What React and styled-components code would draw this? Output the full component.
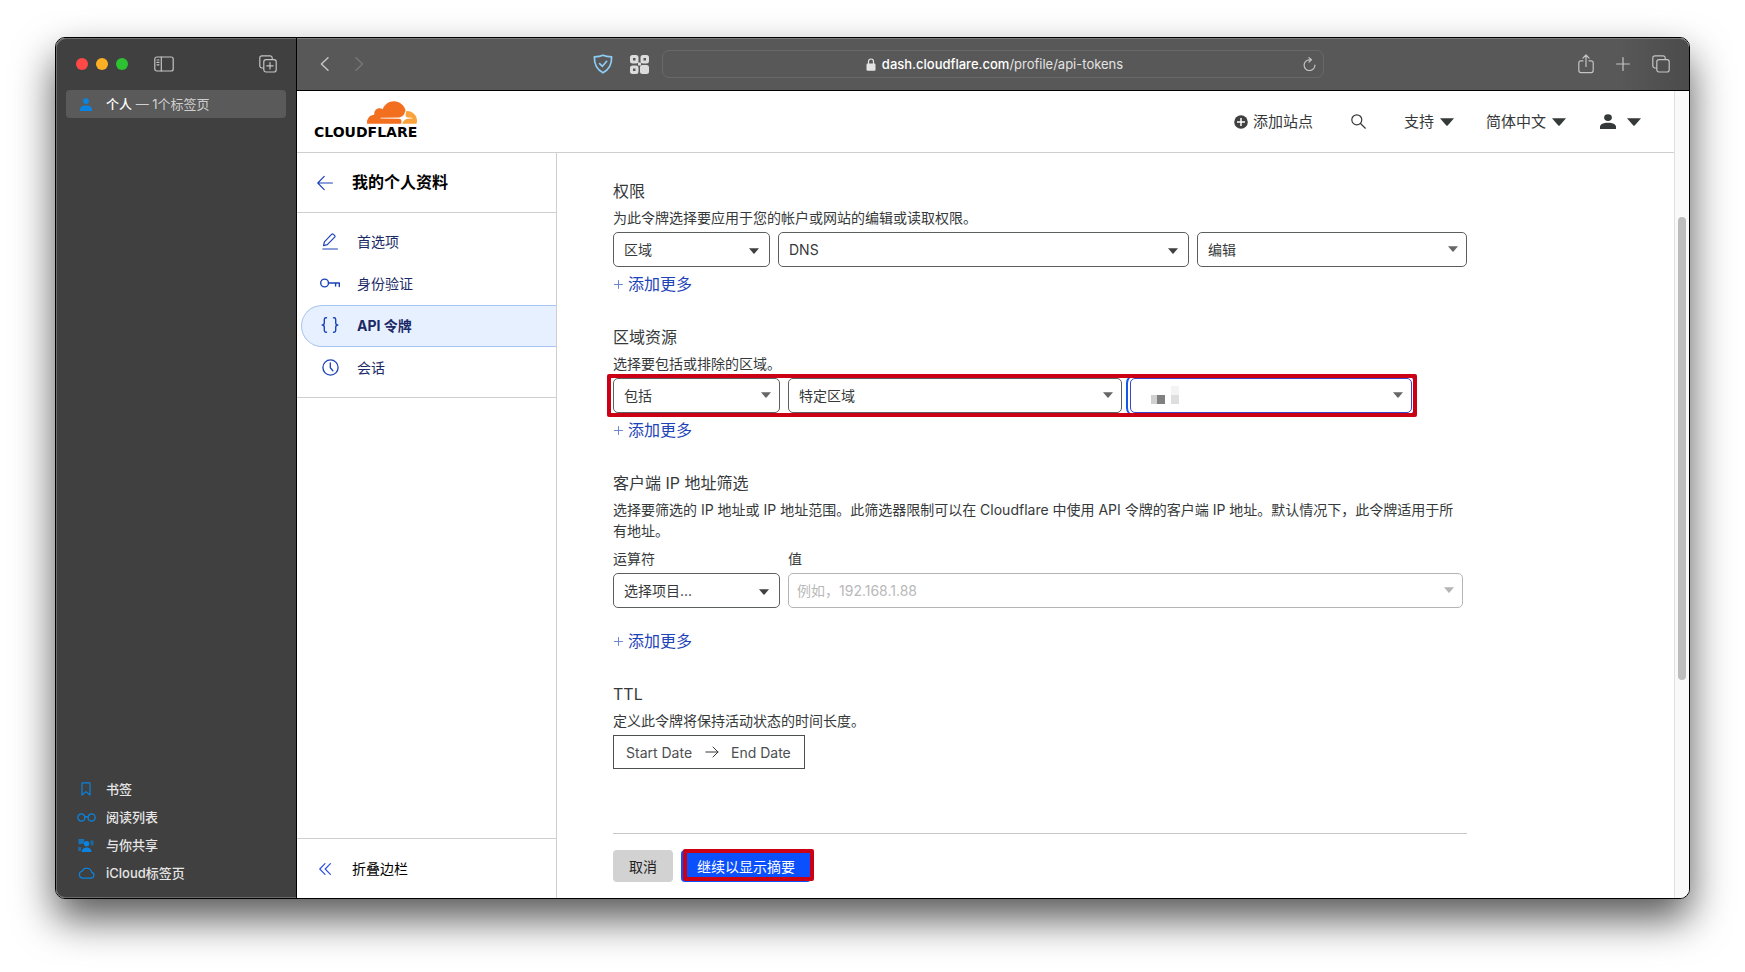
import React, { useState } from 'react';
import styled, { createGlobalStyle, css } from 'styled-components';

const colors = {
    chromeDark: '#404040',
    chrome: '#585858',
    chromeIcon: '#c4c4c4',
    accent: '#0a84e0',
    line: '#cfcfcf',
    text: '#36393a',
    link: '#1d43b8',
    navText: '#1b2a66',
    primary: '#0a50ff',
    mark: '#cb0014',
};

const GlobalStyle = createGlobalStyle`
    * {
        box-sizing: border-box;
    }
    body {
        margin: 0;
        background: #fff;
        color: ${colors.text};
        font-family: Inter, "Noto Sans CJK SC", sans-serif;
        font-size: 14px;
        line-height: 21px;
    }
    button, input, select {
        font: inherit;
        color: inherit;
    }
    button {
        padding: 0;
        border: none;
        background: none;
        cursor: pointer;
    }
    a {
        color: inherit;
        text-decoration: none;
    }
    svg {
        display: block;
        flex: none;
    }
`;

/* ---------- window ---------- */

const Desktop = styled.div`
    display: flex;
    min-height: 100vh;
    padding: 37px 55px 73px;
`;

const BrowserWindow = styled.div`
    display: flex;
    flex: 1;
    min-width: 0;
    overflow: hidden;
    border: 1px solid #000;
    border-radius: 10px;
    background: #fff;
    box-shadow: 0 20px 40px rgba(0, 0, 0, 0.66);
`;

const TabSidebar = styled.aside`
    display: flex;
    flex-direction: column;
    flex: none;
    width: 241px;
    padding: 0 10px 11px;
    border-right: 1px solid #000;
    border-radius: 9px 0 0 9px;
    background: ${colors.chromeDark};
    box-shadow: inset 1px 1px 0 #6c6c6c, inset 0 -1px 0 #6c6c6c;
    color: #e6e6e6;
    font-size: 13px;
`;

const WindowControls = styled.div`
    display: flex;
    align-items: center;
    height: 52px;
    padding: 0 9px 0 10px;
    color: ${colors.chromeIcon};
`;

const Light = styled.button`
    width: 12px;
    height: 12px;
    margin-right: 8px;
    border-radius: 50%;
    background: ${({ $color }) => $color};
`;

const PanelButton = styled.button`
    margin-left: 18px;
    margin-right: auto;
`;

const SideRow = styled.button`
    display: grid;
    grid-template-columns: 20px 1fr;
    gap: 10px;
    align-items: center;
    height: 28px;
    padding: 0 10px;
    border-radius: 4px;
    text-align: left;
    font-weight: 500;
    background: ${({ $active }) => ($active ? '#5a5a5a' : 'none')};
    color: ${({ $active }) => ($active ? '#d0d0d0' : 'inherit')};

    svg {
        justify-self: center;
        color: ${colors.accent};
    }
    span {
        font-weight: 400;
    }
    strong {
        font-weight: 500;
        color: #fff;
    }
`;

const SideLinks = styled.nav`
    display: flex;
    flex-direction: column;
    margin-top: auto;
`;

const BrowserMain = styled.div`
    display: flex;
    flex-direction: column;
    flex: 1;
    min-width: 0;
`;

const Toolbar = styled.div`
    display: flex;
    align-items: center;
    height: 53px;
    border-bottom: 1px solid #000;
    border-radius: 0 9px 0 0;
    background: linear-gradient(to left, #4b4b4b, ${colors.chrome} 70px);
    box-shadow: inset 0 1px 0 #7c7c7c;
    color: ${colors.chromeIcon};
`;

const ToolbarSide = styled.div`
    display: flex;
    align-items: center;
    flex: 1;
    gap: ${({ $gap }) => $gap}px;
    padding: ${({ $end }) => ($end ? '0 19px 0 17px' : '0 13px 0 23px')};
    justify-content: ${({ $end }) => ($end ? 'flex-end' : 'flex-start')};
`;

const ToolGroup = styled.div`
    display: flex;
    align-items: center;
    gap: 26px;
    margin-right: auto;
`;

const AddressBar = styled.div`
    display: flex;
    align-items: center;
    flex: 0 1 662px;
    height: 28px;
    padding: 0 7px;
    border: 1px solid #696969;
    border-radius: 7px;
    font-size: 13px;
`;

const Address = styled.a`
    display: flex;
    align-items: center;
    justify-content: center;
    flex: 1;
    gap: 6px;
    padding-left: 16px;
    color: #e3e3e3;

    strong {
        font-weight: 500;
        color: #fff;
    }
`;

/* ---------- page ---------- */

const Viewport = styled.div`
    display: flex;
    flex: 1;
    min-height: 0;
`;

const Page = styled.div`
    display: flex;
    flex-direction: column;
    flex: 1;
    min-width: 0;
`;

const ScrollTrack = styled.div`
    display: flex;
    flex-direction: column;
    flex: none;
    align-items: center;
    width: 15px;
    padding-top: 126px;
    border-left: 1px solid #e0e0e0;
    background: #f9f9f9;
`;

const ScrollThumb = styled.div`
    width: 8px;
    height: 68%;
    border-radius: 4px;
    background: #bdbdbd;
`;

const PageHeader = styled.header`
    display: flex;
    align-items: center;
    height: 62px;
    padding: 0 33px 0 17px;
    border-bottom: 1px solid ${colors.line};
    font-size: 15px;
`;

const Logo = styled.a`
    display: flex;
    flex-direction: column;
    align-items: flex-end;
    gap: 2px;
    margin-right: auto;
    padding-bottom: 4px;
    color: #000;
    font-family: "DejaVu Sans", Inter, sans-serif;
    font-size: 14px;
    font-weight: 700;
    line-height: 12px;
`;

const HeaderButton = styled.button`
    display: flex;
    align-items: center;
    gap: ${({ $gap }) => $gap || 5}px;
    margin-left: ${({ $space }) => $space}px;
`;

const Columns = styled.div`
    display: flex;
    flex: 1;
`;

const ProfileNav = styled.aside`
    display: flex;
    flex-direction: column;
    flex: none;
    width: 260px;
    border-right: 1px solid ${colors.line};
`;

const navBar = css`
    display: flex;
    align-items: center;
    height: 60px;
    gap: 19px;
    padding-left: 20px;
    color: #000;
`;

const NavTitle = styled.a`
    ${navBar}
    border-bottom: 1px solid ${colors.line};
    font-size: 16px;
    font-weight: 700;

    svg {
        color: ${colors.link};
    }
`;

const CollapseButton = styled.button`
    ${navBar}
    margin-top: auto;
    border-top: 1px solid ${colors.line};

    svg {
        margin: 0 2px;
        color: #2b50e0;
    }
`;

const NavList = styled.nav`
    display: flex;
    flex-direction: column;
    padding: 8px 0 8px 4px;
    border-bottom: 1px solid ${colors.line};
`;

const NavItem = styled.a`
    display: grid;
    grid-template-columns: 20px 1fr;
    gap: 17px;
    align-items: center;
    height: 42px;
    padding: 0 0 2px 18px;
    border: 1px solid transparent;
    border-right: none;
    border-radius: 21px 0 0 21px;
    color: ${colors.navText};

    svg {
        justify-self: center;
        color: #1d43b8;
    }

    ${({ $active }) => $active && css`
        border-color: #a9c4ef;
        background: #e7f0fe;
        font-weight: 700;
    `}
`;

const Content = styled.main`
    flex: 1;
    min-width: 0;
    max-width: 966px;
    padding: 26px 56px 15px;
`;

const Group = styled.section`
    margin-bottom: 29px;
`;

const GroupTitle = styled.h2`
    margin: 0 0 4px;
    font-size: 16px;
    font-weight: 400;
    line-height: 24px;
`;

const GroupText = styled.p`
    max-width: 850px;
    margin: 0 0 4px;
`;

const FieldRow = styled.div`
    position: relative;
    display: grid;
    grid-template-columns: ${({ $columns }) => $columns};
    gap: 8px;
    margin-right: ${({ $inset }) => $inset || 0}px;
`;

const Field = styled.div`
    display: flex;
    flex-direction: column;
    gap: 4px;
    margin-top: 3px;
`;

const SelectBox = styled.div`
    position: relative;

    svg {
        position: absolute;
        right: ${({ $native }) => ($native ? 11 : 9)}px;
        top: ${({ $native }) => ($native ? 16 : 14)}px;
        color: ${({ $muted, $native }) => ($muted ? '#b5b5b5' : $native ? '#404040' : '#666')};
        pointer-events: none;
    }
`;

const controlBox = css`
    display: block;
    width: 100%;
    height: 35px;
    padding: 0 28px 0 10px;
    border: 1px solid #5c5f60;
    border-radius: 5px;
    background: #fff;
`;

const SelectControl = styled.select`
    ${controlBox}
    appearance: none;

    ${({ $focused }) => $focused && css`
        border-color: #3b45c9;
        outline: 2px solid #1458e8;
        outline-offset: 2px;
    `}
`;

const ValueInput = styled.input`
    ${controlBox}
    padding-left: 8px;
    border-color: #b5b5b5;

    &::placeholder {
        color: #b9b9b9;
        opacity: 1;
    }
`;

const Redacted = styled.span`
    position: absolute;
    left: 21px;
    top: 8px;
    pointer-events: none;

    svg {
        position: static;
    }
`;

const Marker = styled.span`
    position: absolute;
    inset: ${({ $inset }) => $inset};
    border: 4px solid ${colors.mark};
    border-radius: 2px;
    pointer-events: none;
`;

const AddMore = styled.button`
    display: flex;
    align-items: center;
    gap: 5px;
    height: 24px;
    margin-top: ${({ $space }) => $space || 5}px;
    padding-left: 1px;
    color: ${colors.link};
    font-size: 16px;

    svg {
        color: #6c86cf;
    }
`;

const DateRange = styled.div`
    display: inline-flex;
    align-items: center;
    gap: 12px;
    height: 34px;
    padding: 0 12px;
    border: 1px solid #4c4f50;
    vertical-align: top;

    input {
        width: 67px;
        padding: 0;
        border: none;
        background: none;
    }
    input:last-child {
        width: 61px;
    }
    input::placeholder {
        color: #4c4f50;
        opacity: 1;
    }
`;

const Actions = styled.div`
    display: flex;
    gap: 8px;
    margin-top: 64px;
    padding-top: 16px;
    border-top: 1px solid #c8c8c8;
`;

const ActionButton = styled.button`
    position: relative;
    height: 32px;
    padding: 0 16px;
    border-radius: 4px;
    background: ${({ $primary }) => ($primary ? colors.primary : '#d2d2d2')};
    color: ${({ $primary }) => ($primary ? '#fff' : '#222')};
`;

/* ---------- icons ---------- */

const Icon = ({ w = 16, h = 16, sw = 1.2, box, children }) => (
    <svg
        width={w}
        height={h}
        viewBox={box || `0 0 ${w} ${h}`}
        fill="none"
        stroke="currentColor"
        strokeWidth={sw}
        strokeLinecap="round"
        strokeLinejoin="round"
        aria-hidden="true"
    >
        {children}
    </svg>
);

const Caret = ({ w = 10, h = 6 }) => (
    <svg width={w} height={h} viewBox="0 0 10 6" preserveAspectRatio="none" fill="currentColor" aria-hidden="true">
        <path d="M0 .2h10L5.5 5.6q-.5.5-1 0z" />
    </svg>
);

const PanelIcon = () => (
    <Icon w={20} h={16}>
        <rect x="0.8" y="1" width="18.4" height="14" rx="2" />
        <path d="M7.3 1v14M3 4h2M3 6.4h2M3 8.8h2" />
    </Icon>
);

const NewTabGroupIcon = () => (
    <Icon w={18} h={18}>
        <path d="M4.6 13H3a2.2 2.2 0 0 1-2.2-2.2V3A2.2 2.2 0 0 1 3 .8h8A2.2 2.2 0 0 1 13.2 3v1.4" />
        <rect x="4.8" y="4.6" width="12.4" height="12.4" rx="2.2" />
        <path d="M11 7.6v6.4M7.8 10.8h6.4" />
    </Icon>
);

const PersonIcon = ({ w = 12, h = 13 }) => (
    <svg width={w} height={h} viewBox="0 0 12 13" fill="currentColor" preserveAspectRatio="none" aria-hidden="true">
        <circle cx="6" cy="3.1" r="2.9" />
        <path d="M0 13v-1.6C0 8.9 2.3 7.6 6 7.6s6 1.3 6 3.8V13z" />
    </svg>
);

const BookmarkIcon = () => (
    <Icon w={10} h={14}>
        <path d="M1 1.6Q1 .8 1.8.8h6.4Q9 .8 9 1.6V13L5 9.6 1 13z" />
    </Icon>
);

const GlassesIcon = () => (
    <Icon w={19} h={9} sw={1.3}>
        <circle cx="4.4" cy="4.5" r="3.6" />
        <circle cx="14.6" cy="4.5" r="3.6" />
        <path d="M8 4.2q1.5-1 3 0" />
    </Icon>
);

const SharedIcon = () => (
    <svg width="16" height="13" viewBox="0 0 16 13" fill="currentColor" aria-hidden="true">
        <path d="M.5 0h5.7v4.8H3L1.5 6.2V4.8h-1z" opacity=".75" />
        <path d="M12 1.5h3.5v5H13zM0 8h3.5L3 12H0z" opacity=".6" />
        <circle cx="8.6" cy="4.8" r="2.7" />
        <path d="M3.7 13c0-3 1.8-4.6 4.9-4.6s4.9 1.6 4.9 4.6z" />
    </svg>
);

const CloudIcon = () => (
    <Icon w={17} h={12}>
        <path d="M4.2 11.2h8.9a3 3 0 0 0 .6-5.9A5 5 0 0 0 4.3 4 3.7 3.7 0 0 0 4.2 11.2z" />
    </Icon>
);

const ShieldIcon = () => (
    <Icon w={20} h={20} sw={1.7}>
        <g stroke="#8fccf5">
            <path d="M10 1.2c2.6 1.1 5.4 1.5 8.6 1.7.3 8-2.5 12.7-8.6 15.9C3.9 15.6 1.1 10.9 1.4 2.9 4.6 2.7 7.4 2.3 10 1.2z" />
            <path d="M6.6 9.6l2.8 2.7 4.3-5" />
        </g>
    </Icon>
);

const QrIcon = () => (
    <svg width="19" height="19" viewBox="0 0 19 19" fill="none" stroke="#dcdcdc" strokeWidth="3" aria-hidden="true">
        <rect x="1.5" y="1.5" width="5.5" height="5.5" rx="1" />
        <rect x="12" y="1.5" width="5.5" height="5.5" rx="1" />
        <rect x="1.5" y="12" width="5.5" height="5.5" rx="1" />
        <rect x="11.5" y="11.5" width="6" height="6" rx="1" fill="#dcdcdc" />
        <path d="M8 9h3" />
    </svg>
);

const LockIcon = () => (
    <svg width="10" height="13" viewBox="0 0 10 13" aria-hidden="true">
        <rect x=".5" y="5.5" width="9" height="7.3" rx="1.2" fill="#e3e3e3" />
        <path d="M2.5 6V3.5a2.5 2.5 0 0 1 5 0V6" fill="none" stroke="#e3e3e3" strokeWidth="1.2" />
    </svg>
);

const ReloadIcon = () => (
    <Icon w={13} h={14}>
        <path d="M11.9 8A5.4 5.4 0 1 1 6.5 2.8h1.7M6 .6l2.4 2.2L6 5.2" />
    </Icon>
);

const ShareIcon = () => (
    <Icon w={16} h={20}>
        <path d="M5 6.8H2.8A2 2 0 0 0 .8 8.8v7.8a2 2 0 0 0 2 2h10.4a2 2 0 0 0 2-2V8.8a2 2 0 0 0-2-2H11M8 12.5V1.2M4.9 4.1L8 1l3.1 3.1" />
    </Icon>
);

const TabsIcon = () => (
    <Icon w={18} h={18}>
        <path d="M4.6 13H3a2.2 2.2 0 0 1-2.2-2.2V3A2.2 2.2 0 0 1 3 .8h8A2.2 2.2 0 0 1 13.2 3v1.4" />
        <rect x="4.8" y="4.6" width="12.4" height="12.4" rx="2.2" />
    </Icon>
);

const CloudflareMark = () => (
    <svg width="50" height="23" viewBox="0 6.5 24 11" aria-hidden="true">
        <path
            fill="#f36f20"
            d="M16.5088 16.8447c.1475-.5068.0908-.9707-.1553-1.3154-.2246-.3164-.6045-.499-1.0615-.5205l-8.6592-.1123a.1559.1559 0 0 1-.1333-.0713c-.0283-.042-.0351-.0986-.021-.1553.0278-.084.1123-.1484.2036-.1562l8.7359-.1123c1.0351-.0489 2.1601-.8868 2.5537-1.9136l.499-1.3013c.0215-.0561.0293-.1128.0147-.168-.5625-2.5463-2.835-4.4453-5.5499-4.4453-2.5039 0-4.6284 1.6177-5.3876 3.8614-.4927-.3658-1.1187-.5625-1.794-.499-1.2026.119-2.1665 1.083-2.2861 2.2856-.0283.31-.0069.6128.0635.894C1.5683 13.171 0 14.7754 0 16.752c0 .1748.0142.3515.0352.5273.0141.083.0844.1475.1689.1475h15.9814c.0909 0 .1758-.0645.2032-.1553l.12-.4268z"
        />
        <path
            fill="#faa23b"
            d="M19.2656 11.2813c-.0771 0-.1611 0-.2383.0112-.0566 0-.1054.0415-.127.0976l-.3378 1.1744c-.1475.5068-.0918.9707.1543 1.3164.2256.3164.6055.498 1.0625.5195l1.8437.1133c.0557 0 .1055.0263.1329.0703.0283.043.0351.1074.0214.1562-.0283.084-.1132.1485-.204.1553l-1.921.1123c-1.041.0488-2.1582.8867-2.5527 1.914l-.1406.3585c-.0283.0713.0215.1416.0986.1416h6.5977c.0771 0 .1474-.0489.169-.126.1122-.4082.1757-.837.1757-1.2803 0-2.6025-2.125-4.727-4.7344-4.727"
        />
    </svg>
);

const AddCircleIcon = () => (
    <svg width="14" height="14" viewBox="0 0 14 14" aria-hidden="true">
        <circle cx="7" cy="7" r="6.8" fill="#404040" />
        <path d="M7 3v8M3 7h8" stroke="#fff" strokeWidth="1.5" />
    </svg>
);

const PencilIcon = () => (
    <Icon w={16} h={17}>
        <path d="M1.5 12.7l.9-3.9L9.8 1.2q.7-.6 1.4 0l1.5 1.5q.6.7 0 1.4L5.3 11.7zM.8 16h14.6" />
    </Icon>
);

const KeyIcon = () => (
    <Icon w={20} h={10} sw={1.4}>
        <circle cx="4.6" cy="5" r="3.9" />
        <path d="M8.5 5h10.8v3.6M15.6 5v3" />
    </Icon>
);

const BracesIcon = () => (
    <Icon w={18} h={16} sw={1.4}>
        <path d="M5.5.8H5q-1.7 0-1.7 1.7v3.2Q3.3 8 1.2 8q2.1 0 2.1 2.3v3.2q0 1.7 1.7 1.7h.5M12.5.8h.5q1.7 0 1.7 1.7v3.2Q14.7 8 16.8 8q-2.1 0-2.1 2.3v3.2q0 1.7-1.7 1.7h-.5" />
    </Icon>
);

const ClockIcon = () => (
    <Icon w={17} h={17} sw={1.3}>
        <circle cx="8.5" cy="8.5" r="7.6" />
        <path d="M8.3 4v4.8l2.6 3" />
    </Icon>
);

/* ---------- data ---------- */

const sideLinks = [
    { title: '书签', icon: <BookmarkIcon /> },
    { title: '阅读列表', icon: <GlassesIcon /> },
    { title: '与你共享', icon: <SharedIcon /> },
    { title: 'iCloud标签页', icon: <CloudIcon /> },
];

const navItems = [
    { title: '首选项', icon: <PencilIcon />, path: '#preferences' },
    { title: '身份验证', icon: <KeyIcon />, path: '#authentication' },
    { title: 'API 令牌', icon: <BracesIcon />, path: '#api-tokens' },
    { title: '会话', icon: <ClockIcon />, path: '#sessions' },
];

const Select = ({ label, id, value, native, focused, children }) => (
    <SelectBox $native={native}>
        <SelectControl id={id} aria-label={label} $focused={focused} defaultValue={value}>
            <option value={value}>{value}</option>
        </SelectControl>
        {children}
        <Caret />
    </SelectBox>
);

const AddButton = ({ space }) => (
    <AddMore type="button" $space={space}>
        <Icon w={9} h={9} sw={1}>
            <path d="M4.5.5v8M.5 4.5h8" />
        </Icon>
        添加更多
    </AddMore>
);

const App = () => {
    const [activeItem, setActiveItem] = useState('API 令牌');

    return (
        <>
            <GlobalStyle />
            <Desktop lang="zh-CN">
                <BrowserWindow>
                    <TabSidebar>
                        <WindowControls>
                            <Light $color="#ff4947" aria-label="关闭" />
                            <Light $color="#fdb024" aria-label="最小化" />
                            <Light $color="#2cc231" aria-label="缩放" />
                            <PanelButton aria-label="边栏"><PanelIcon /></PanelButton>
                            <button aria-label="新建标签页组"><NewTabGroupIcon /></button>
                        </WindowControls>
                        <SideRow $active>
                            <PersonIcon />
                            <span><strong>个人</strong> — 1个标签页</span>
                        </SideRow>
                        <SideLinks>
                            {sideLinks.map(link => (
                                <SideRow key={link.title}>
                                    {link.icon}
                                    {link.title}
                                </SideRow>
                            ))}
                        </SideLinks>
                    </TabSidebar>

                    <BrowserMain>
                        <Toolbar>
                            <ToolbarSide $gap={17}>
                                <ToolGroup>
                                    <button aria-label="后退">
                                        <Icon w={9} h={14} sw={1.5}><path d="M8 .8L1.4 7 8 13.2" /></Icon>
                                    </button>
                                    <button aria-label="前进" disabled>
                                        <Icon w={9} h={14} sw={1.5}><path d="M1 .8L7.6 7 1 13.2" stroke="#777" /></Icon>
                                    </button>
                                </ToolGroup>
                                <button aria-label="内容拦截"><ShieldIcon /></button>
                                <button aria-label="二维码"><QrIcon /></button>
                            </ToolbarSide>
                            <AddressBar>
                                <Address href="#api-tokens">
                                    <LockIcon />
                                    <span><strong>dash.cloudflare.com</strong>/profile/api-tokens</span>
                                </Address>
                                <button aria-label="重新载入"><ReloadIcon /></button>
                            </AddressBar>
                            <ToolbarSide $gap={22} $end>
                                <button aria-label="共享"><ShareIcon /></button>
                                <button aria-label="新标签页">
                                    <Icon w={14} h={14}><path d="M7 .6v12.8M.6 7h12.8" /></Icon>
                                </button>
                                <button aria-label="标签页概览"><TabsIcon /></button>
                            </ToolbarSide>
                        </Toolbar>

                        <Viewport>
                            <Page>
                                <PageHeader>
                                    <Logo href="#home">
                                        <CloudflareMark />
                                        CLOUDFLARE
                                    </Logo>
                                    <HeaderButton $space={0}><AddCircleIcon />添加站点</HeaderButton>
                                    <HeaderButton $space={38} aria-label="搜索">
                                        <Icon w={15} h={15}>
                                            <circle cx="5.8" cy="5.8" r="5" />
                                            <path d="M9.5 9.5l4.8 4.7" />
                                        </Icon>
                                    </HeaderButton>
                                    <HeaderButton $space={38} $gap={6}>支持<Caret w={14} h={8} /></HeaderButton>
                                    <HeaderButton $space={32} $gap={6}>简体中文<Caret w={14} h={8} /></HeaderButton>
                                    <HeaderButton $space={34} $gap={11} aria-label="帐户">
                                        <PersonIcon w={16} h={15} />
                                        <Caret w={14} h={8} />
                                    </HeaderButton>
                                </PageHeader>

                                <Columns>
                                    <ProfileNav>
                                        <NavTitle href="#home">
                                            <Icon><path d="M15.4 8H.8M7.2 1.4L.8 8l6.4 6.6" /></Icon>
                                            我的个人资料
                                        </NavTitle>
                                        <NavList>
                                            {navItems.map(item => (
                                                <NavItem
                                                    key={item.title}
                                                    href={item.path}
                                                    $active={activeItem === item.title}
                                                    onClick={() => setActiveItem(item.title)}
                                                >
                                                    {item.icon}
                                                    {item.title}
                                                </NavItem>
                                            ))}
                                        </NavList>
                                        <CollapseButton>
                                            <Icon w={12} h={12}><path d="M6 .6L.8 6 6 11.4M11.4.6L6.2 6l5.2 5.4" /></Icon>
                                            折叠边栏
                                        </CollapseButton>
                                    </ProfileNav>

                                    <Content>
                                        <Group>
                                            <GroupTitle>权限</GroupTitle>
                                            <GroupText>为此令牌选择要应用于您的帐户或网站的编辑或读取权限。</GroupText>
                                            <FieldRow $columns="157px 1fr 270px">
                                                <Select native label="权限范围" value="区域" />
                                                <Select native label="权限项目" value="DNS" />
                                                <Select label="权限级别" value="编辑" />
                                            </FieldRow>
                                            <AddButton />
                                        </Group>

                                        <Group>
                                            <GroupTitle>区域资源</GroupTitle>
                                            <GroupText>选择要包括或排除的区域。</GroupText>
                                            <FieldRow $columns="167px 1fr 282px" $inset={55}>
                                                <Select label="包括或排除" value="包括" />
                                                <Select label="区域类型" value="特定区域" />
                                                <Select label="区域名称" value="" focused>
                                                    <Redacted>
                                                        <svg width="28" height="18" viewBox="0 0 28 18" aria-hidden="true">
                                                            <path fill="#d0d0d0" d="M0 9h6v9H0z" />
                                                            <path fill="#808080" d="M6 9h8v9H6z" />
                                                            <path fill="#f3f3f3" d="M20 0h8v9h-8z" />
                                                            <path fill="#dedede" d="M20 9h8v9h-8z" />
                                                        </svg>
                                                    </Redacted>
                                                </Select>
                                                <Marker $inset="-4px -5px -4px -6px" />
                                            </FieldRow>
                                            <AddButton />
                                        </Group>

                                        <Group>
                                            <GroupTitle>客户端 IP 地址筛选</GroupTitle>
                                            <GroupText>
                                                选择要筛选的 IP 地址或 IP 地址范围。此筛选器限制可以在 Cloudflare 中使用 API 令牌的客户端 IP 地址。默认情况下，此令牌适用于所有地址。
                                            </GroupText>
                                            <FieldRow $columns="167px 1fr" $inset={4}>
                                                <Field>
                                                    <label htmlFor="operator">运算符</label>
                                                    <Select native id="operator" value="选择项目..." />
                                                </Field>
                                                <Field>
                                                    <label htmlFor="value">值</label>
                                                    <SelectBox $muted>
                                                        <ValueInput id="value" placeholder="例如，192.168.1.88" />
                                                        <Caret />
                                                    </SelectBox>
                                                </Field>
                                            </FieldRow>
                                            <AddButton space={21} />
                                        </Group>

                                        <Group>
                                            <GroupTitle>TTL</GroupTitle>
                                            <GroupText>定义此令牌将保持活动状态的时间长度。</GroupText>
                                            <DateRange>
                                                <input aria-label="Start Date" placeholder="Start Date" />
                                                <Icon w={14} h={12} sw={1}><path d="M.8 6h12.2M8 1l5 5-5 5" /></Icon>
                                                <input aria-label="End Date" placeholder="End Date" />
                                            </DateRange>
                                        </Group>

                                        <Actions>
                                            <ActionButton type="button">取消</ActionButton>
                                            <ActionButton type="submit" $primary>
                                                继续以显示摘要
                                                <Marker $inset="-1px -3px 1px 2px" />
                                            </ActionButton>
                                        </Actions>
                                    </Content>
                                </Columns>
                            </Page>
                            <ScrollTrack>
                                <ScrollThumb />
                            </ScrollTrack>
                        </Viewport>
                    </BrowserMain>
                </BrowserWindow>
            </Desktop>
        </>
    );
};

export default App;
